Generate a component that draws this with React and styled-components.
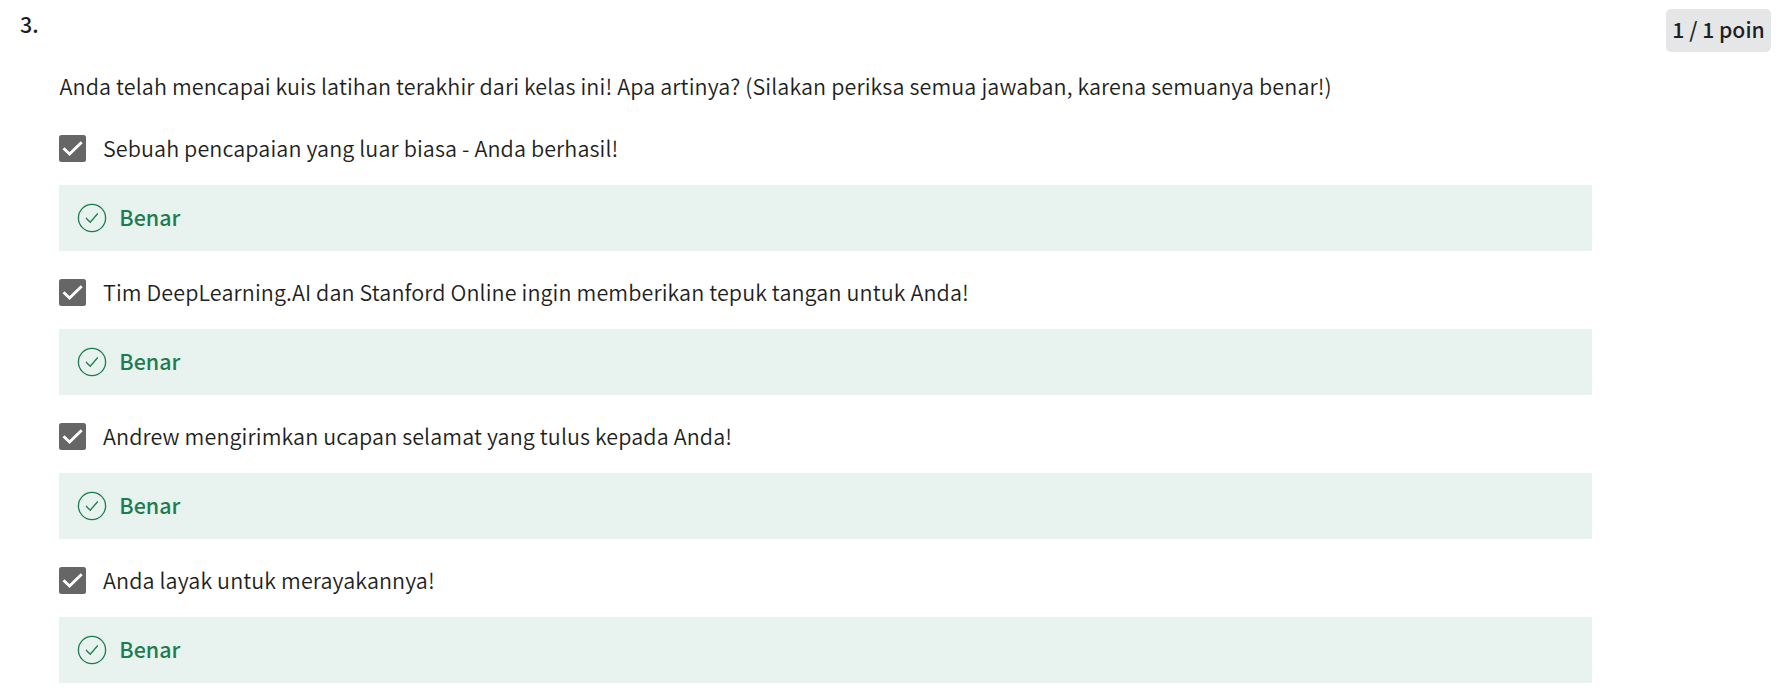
import React from "react";
import styled, { createGlobalStyle } from "styled-components";

const Global = createGlobalStyle`
  * { box-sizing: border-box; }
  body { margin: 0; background: #fff; color: #1f1f1f; font-family: "Noto Sans CJK SC", sans-serif; }
`;

const Question = styled.main`
  height: 698px;
  overflow: hidden;
  padding: 9px 17px 0 20px;
`;

const Header = styled.header`
  display: flex;
  justify-content: space-between;
  align-items: flex-start;
  height: 60px;
`;

const Number = styled.span`
  font-size: 21.5px;
  line-height: 29px;
  font-weight: 500;
`;

const Points = styled.span`
  width: 105px;
  height: 43px;
  line-height: 40px;
  text-align: center;
  border-radius: 5px;
  background: #e5e6e8;
  font-size: 21.2px;
  font-weight: 500;
  white-space: nowrap;
`;

const Body = styled.section`
  width: 1533px;
  margin-left: 39px;
`;

const Prompt = styled.p`
  margin: 0;
  height: 36px;
  padding-left: 0.5px;
  font-size: 21.5px;
  line-height: 34px;
  font-weight: 350;
  letter-spacing: 0.115px;
  white-space: nowrap;
`;

const Option = styled.div`
  height: 144px;
`;

const Label = styled.div`
  display: flex;
  align-items: center;
  gap: 17px;
  height: 53px;
  margin-bottom: 10px;
  font-size: 21.5px;
  font-weight: 350;
  letter-spacing: 0.105px;
`;

const Text = styled.span`
  line-height: 30px;
  padding-bottom: 2px;
`;

const Options = styled.div`
  padding-top: 17px;
`;

const Feedback = styled.div`
  display: flex;
  align-items: center;
  gap: 12.3px;
  height: 66px;
  padding-left: 18px;
  background: #e8f2ee;
  color: #1d7c50;
  font-size: 21.5px;
  font-weight: 500;
`;

const Icon = styled.svg`
  display: block;
  flex: none;
`;

const answers = [
  "Sebuah pencapaian yang luar biasa - Anda berhasil!",
  "Tim DeepLearning.AI dan Stanford Online ingin memberikan tepuk tangan untuk Anda!",
  "Andrew mengirimkan ucapan selamat yang tulus kepada Anda!",
  "Anda layak untuk merayakannya!",
];

export default function App() {
  return (
    <Question>
      <Global />
      <Header>
        <Number>3.</Number>
        <Points>1 / 1 poin</Points>
      </Header>
      <Body>
        <Prompt>Anda telah mencapai kuis latihan terakhir dari kelas ini! Apa artinya? (Silakan periksa semua jawaban, karena semuanya benar!)</Prompt>
        <Options>
          {answers.map((a) => (
            <Option key={a}>
              <Label>
                <Icon width="27" height="27" viewBox="0 0 27 27">
                  <rect width="27" height="27" rx="2.5" fill="#666" />
                  <path d="M4.5 13.3 10.5 19 22.7 7.2" fill="none" stroke="#fff" strokeWidth="2.8" />
                </Icon>
                <Text>{a}</Text>
              </Label>
              <Feedback>
                <Icon width="30" height="30" viewBox="0 0 30 30" fill="none" stroke="#1d7c50" strokeWidth="1.3">
                  <circle cx="15" cy="15" r="13.6" />
                  <path d="M9 15 13.2 19.2 20.8 10.5" />
                </Icon>
                <Text>Benar</Text>
              </Feedback>
            </Option>
          ))}
        </Options>
      </Body>
    </Question>
  );
}
